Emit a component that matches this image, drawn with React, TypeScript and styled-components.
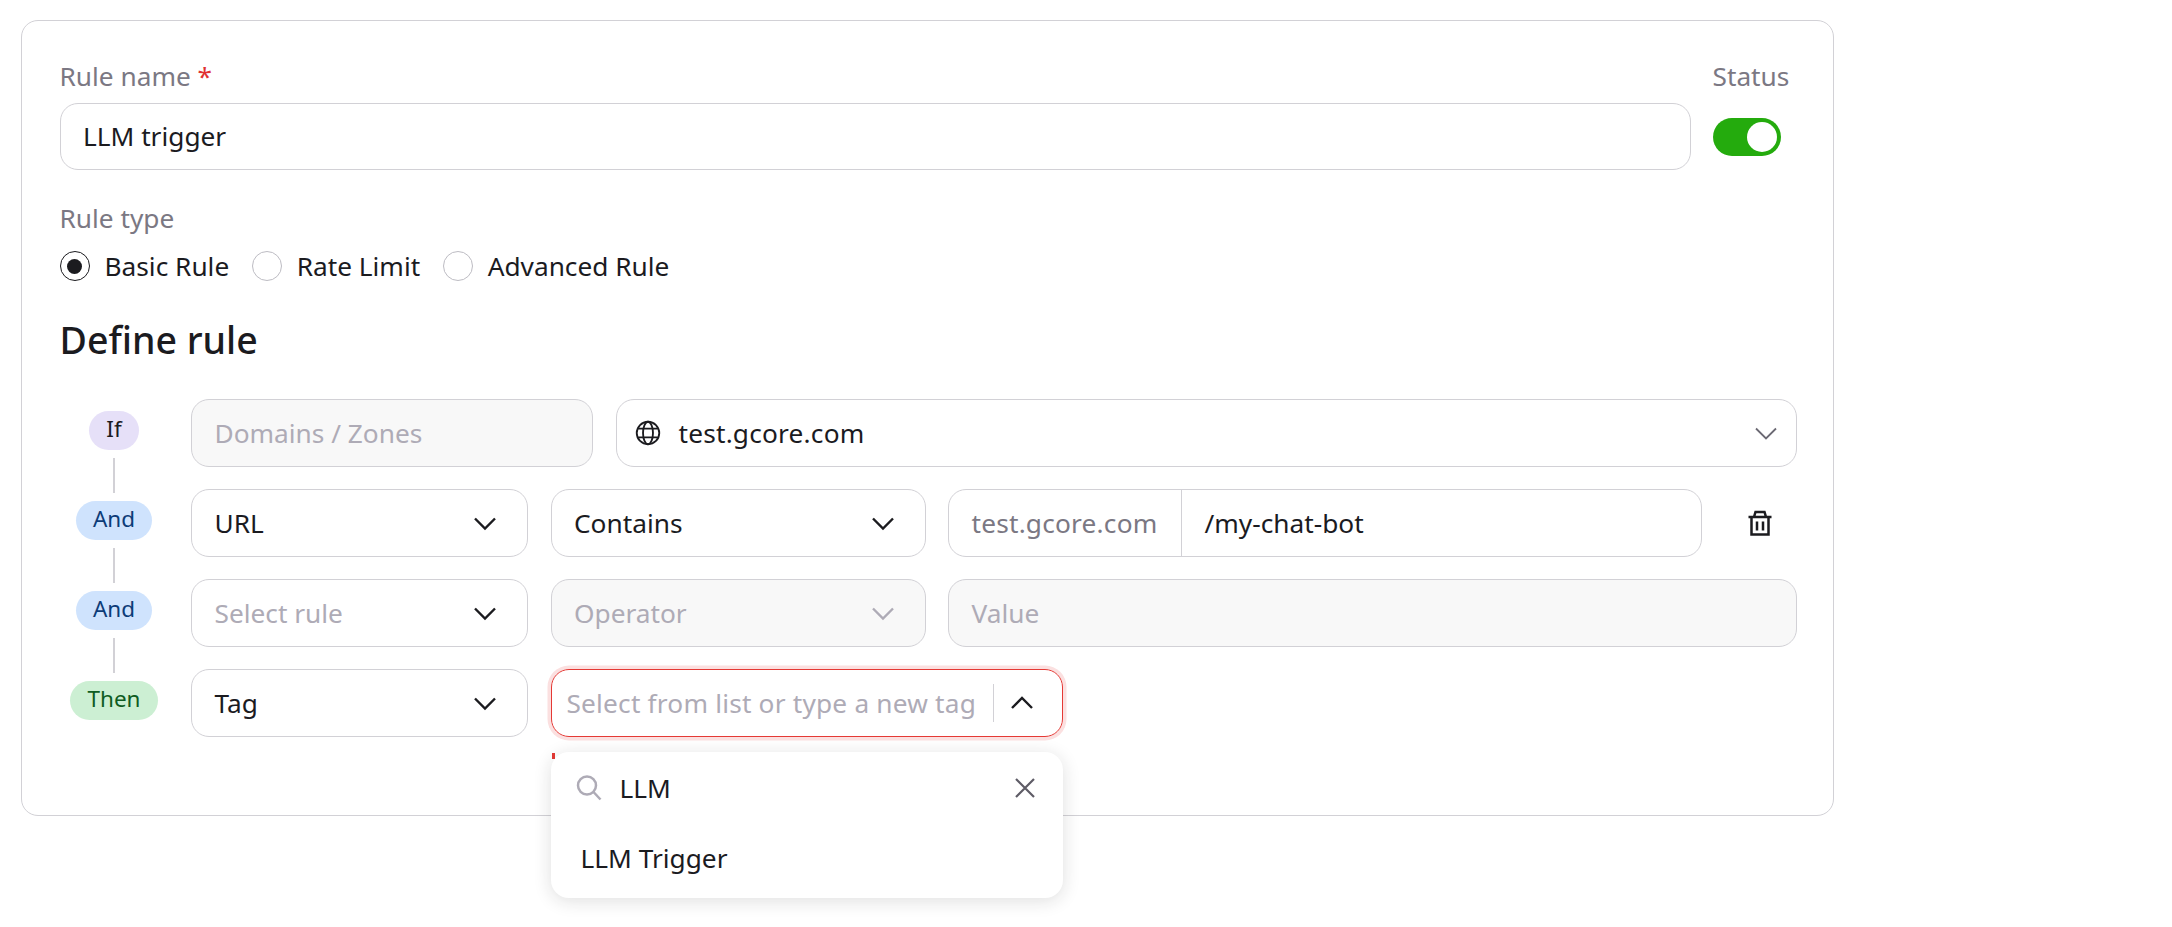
import React from "react";
import styled, { createGlobalStyle } from "styled-components";

const GlobalStyle = createGlobalStyle`
  html, body {
    margin: 0;
    padding: 0;
    background: #fff;
    font-family: "Noto Sans", sans-serif;
    color: #1b1b1f;
  }
  * { box-sizing: border-box; }
`;

const ChevronDown = ({ color = "#1b1b1f", width = 2.4 }: { color?: string; width?: number }) => (
  <svg width="24" height="24" viewBox="0 0 24 24" fill="none" stroke={color} strokeWidth={width}>
    <path d="M2 7.5 12 17.5 22 7.5" />
  </svg>
);

const ChevronUp = () => (
  <svg width="24" height="24" viewBox="0 0 24 24" fill="none" stroke="#1b1b1f" strokeWidth="2.4">
    <path d="M2 17 12 7 22 17" />
  </svg>
);

const GlobeIcon = () => (
  <svg width="26" height="26" viewBox="0 0 24 24" fill="none" stroke="#1b1b1f" strokeWidth="1.7">
    <circle cx="12" cy="12" r="10.4" />
    <ellipse cx="12" cy="12" rx="4.6" ry="10.4" />
    <path d="M2.8 8h18.4M2.8 16h18.4" />
  </svg>
);

const TrashIcon = () => (
  <svg width="24" height="26" viewBox="0 0 24 26" fill="none" stroke="#1b1b1f" strokeWidth="2.5">
    <path d="M0.5 7h23M6 7l1.5-5h9L18 7M3.5 7v17.5h17V7M9 11.5v9M15 11.5v9" />
  </svg>
);

const SearchIcon = () => (
  <svg width="26" height="26" viewBox="0 0 26 26" fill="none" stroke="#aeabb6" strokeWidth="2.5">
    <circle cx="11" cy="10.5" r="9" />
    <path d="m17.5 17 7 7.5" />
  </svg>
);

const CloseIcon = () => (
  <svg width="20" height="20" viewBox="0 0 20 20" fill="none" stroke="#5e5c66" strokeWidth="2.2">
    <path d="M1 1l18 18M19 1 1 19" />
  </svg>
);

const App = () => {
  return (
    <Page>
      <GlobalStyle />
      <Card>
        <TopRow>
          <NameField>
            <Label>
              Rule name <Required>*</Required>
            </Label>
            <Field>
              <Value>LLM trigger</Value>
            </Field>
          </NameField>
          <StatusField>
            <Label>Status</Label>
            <Toggle>
              <Knob />
            </Toggle>
          </StatusField>
        </TopRow>

        <TypeBlock>
          <Label>Rule type</Label>
          <RadioRow>
            <RadioItem>
              <Radio $checked />
              Basic Rule
            </RadioItem>
            <RadioItem>
              <Radio />
              Rate Limit
            </RadioItem>
            <RadioItem>
              <Radio />
              Advanced Rule
            </RadioItem>
          </RadioRow>
        </TypeBlock>

        <Heading>Define rule</Heading>

        <Rules>
          <RuleRow>
            <BadgeCell>
              <Badge $kind="if">If</Badge>
            </BadgeCell>
            <Field $disabled $width={402}>
              <Placeholder>Domains / Zones</Placeholder>
            </Field>
            <DomainField $grow>
              <GlobeIcon />
              <DomainValue>test.gcore.com</DomainValue>
              <ChevronDown color="#6b6973" width={1.8} />
            </DomainField>
          </RuleRow>

          <RuleRow>
            <BadgeCell $line>
              <Badge $kind="and">And</Badge>
            </BadgeCell>
            <Field $width={337}>
              <Value>URL</Value>
              <ChevronDown />
            </Field>
            <Field $width={375}>
              <Value>Contains</Value>
              <ChevronDown />
            </Field>
            <PrefixField>
              <Prefix>test.gcore.com</Prefix>
              <PrefixValue>/my-chat-bot</PrefixValue>
            </PrefixField>
            <TrashButton>
              <TrashIcon />
            </TrashButton>
          </RuleRow>

          <RuleRow>
            <BadgeCell $line>
              <Badge $kind="and">And</Badge>
            </BadgeCell>
            <Field $width={337}>
              <Placeholder>Select rule</Placeholder>
              <ChevronDown />
            </Field>
            <Field $disabled $width={375}>
              <Placeholder>Operator</Placeholder>
              <ChevronDown color="#aeabb6" />
            </Field>
            <Field $disabled $grow>
              <Placeholder>Value</Placeholder>
            </Field>
          </RuleRow>

          <RuleRow>
            <BadgeCell $line>
              <Badge $kind="then">Then</Badge>
            </BadgeCell>
            <Field $width={337}>
              <Value>Tag</Value>
              <ChevronDown />
            </Field>
            <TagSelect>
              <TagInput>
                <TagPlaceholder>Select from list or type a new tag</TagPlaceholder>
                <TagDivider />
                <ChevronUp />
              </TagInput>
              <ErrorTick />
              <Dropdown>
                <SearchRow>
                  <SearchIcon />
                  <SearchValue>LLM</SearchValue>
                  <CloseIcon />
                </SearchRow>
                <Option>LLM Trigger</Option>
              </Dropdown>
            </TagSelect>
          </RuleRow>
        </Rules>
      </Card>
    </Page>
  );
};

export default App;

const badgeColors = {
  if: { bg: "#e6e0f8", fg: "#1b1b1f" },
  and: { bg: "#cfe3fd", fg: "#0d3c78" },
  then: { bg: "#ccefd3", fg: "#0e5c22" },
};

const Page = styled.div`
  width: 2172px;
  height: 927px;
  padding: 20px 0 0 21px;
  overflow: hidden;
`;

const Card = styled.div`
  width: 1813px;
  height: 796px;
  padding: 37.5px 36.5px 0 37.5px;
  border: 1.5px solid #d2d1d6;
  border-radius: 17px;
`;

const TopRow = styled.div`
  display: flex;
  align-items: flex-start;
  gap: 22px;
`;

const NameField = styled.div`
  width: 1631px;
  flex: none;
  display: flex;
  flex-direction: column;
  gap: 9px;
`;

const StatusField = styled.div`
  display: flex;
  flex-direction: column;
`;

const Label = styled.div`
  font-size: 26.25px;
  line-height: 35px;
  color: #7b7883;
`;

const Required = styled.span`
  color: #e03131;
`;

const Field = styled.div<{ $disabled?: boolean; $width?: number; $grow?: boolean }>`
  display: flex;
  align-items: center;
  height: 67.5px;
  padding: 0 30px 0 22.5px;
  border: 1.5px solid #d2d1d6;
  border-radius: 18px;
  background: ${(p) => (p.$disabled ? "#f8f8f8" : "#fff")};
  flex: ${(p) => (p.$grow ? "1 1 0" : "none")};
  width: ${(p) => (p.$width ? `${p.$width}px` : "auto")};
  justify-content: space-between;
`;

const DomainField = styled(Field)`
  padding: 0 18px 0 18px;
`;

const Value = styled.span`
  font-size: 26.25px;
  color: #1b1b1f;
`;

const Placeholder = styled.span`
  font-size: 26.25px;
  color: #aeabb6;
  white-space: nowrap;
`;

const DomainValue = styled(Value)`
  flex: 1;
  margin-left: 18px;
  letter-spacing: 0.2px;
`;

const Toggle = styled.div`
  display: flex;
  justify-content: flex-end;
  align-items: center;
  width: 68px;
  height: 38px;
  margin-top: 24px;
  padding: 0 3.5px;
  border-radius: 19px;
  background: #24ab0d;
`;

const Knob = styled.div`
  width: 30px;
  height: 30px;
  border-radius: 50%;
  background: #fff;
`;

const TypeBlock = styled.div`
  margin-top: 31px;
`;

const RadioRow = styled.div`
  display: flex;
  gap: 22.5px;
  margin-top: 14px;
`;

const RadioItem = styled.label`
  display: flex;
  align-items: center;
  gap: 15px;
  height: 32px;
  font-size: 26.25px;
`;

const Radio = styled.span<{ $checked?: boolean }>`
  display: flex;
  align-items: center;
  justify-content: center;
  width: 30px;
  height: 30px;
  border-radius: 50%;
  border: 1.5px solid ${(p) => (p.$checked ? "#1b1b1f" : "#bdbcc3")};
  &::after {
    content: "";
    display: ${(p) => (p.$checked ? "block" : "none")};
    width: 15px;
    height: 15px;
    border-radius: 50%;
    background: #1b1b1f;
  }
`;

const Heading = styled.h2`
  margin: 34px 0 0;
  font-size: 37.5px;
  line-height: 48px;
  font-weight: 500;
  color: #1b1b1f;
`;

const Rules = styled.div`
  display: flex;
  flex-direction: column;
  gap: 22.5px;
  margin-top: 35px;
`;

const RuleRow = styled.div`
  display: flex;
  gap: 22.5px;
  height: 67.5px;
`;

const BadgeCell = styled.div<{ $line?: boolean }>`
  position: relative;
  flex: none;
  width: 109px;
  display: flex;
  justify-content: center;
  padding-top: 12px;
  &::before {
    content: "";
    display: ${(p) => (p.$line ? "block" : "none")};
    position: absolute;
    top: -31px;
    left: 53.5px;
    width: 2.25px;
    height: 35px;
    background: #d2d1d6;
  }
`;

const Badge = styled.div<{ $kind: "if" | "and" | "then" }>`
  height: 39px;
  padding: 0 17px;
  border-radius: 20px;
  font-size: 22.5px;
  line-height: 36px;
  background: ${(p) => badgeColors[p.$kind].bg};
  color: ${(p) => badgeColors[p.$kind].fg};
`;

const PrefixField = styled.div`
  display: flex;
  flex: none;
  width: 753.5px;
  height: 67.5px;
  border: 1.5px solid #d2d1d6;
  border-radius: 18px;
  align-items: center;
`;

const Prefix = styled.div`
  width: 233px;
  height: 100%;
  padding-left: 22.5px;
  border-right: 1px solid #d2d1d6;
  display: flex;
  align-items: center;
  font-size: 26.25px;
  letter-spacing: 0.2px;
  color: #7b7883;
`;

const PrefixValue = styled(Value)`
  margin-left: 22.5px;
`;

const TrashButton = styled.div`
  display: flex;
  align-items: center;
  margin-left: 24px;
`;

const TagSelect = styled.div`
  position: relative;
  flex: none;
  width: 512px;
`;

const TagInput = styled.div`
  display: flex;
  align-items: center;
  height: 67.5px;
  padding: 0 28px 0 15px;
  border: 1.5px solid #e53935;
  border-radius: 18px;
  box-shadow: 0 0 0 3.5px #fbe0e0;
`;

const TagPlaceholder = styled(Placeholder)`
  flex: 1;
  letter-spacing: 0.2px;
`;

const TagDivider = styled.div`
  width: 1px;
  height: 38px;
  margin-right: 16px;
  background: #d2d1d6;
`;

const ErrorTick = styled.div`
  position: absolute;
  top: 84px;
  left: 1px;
  width: 3px;
  height: 6px;
  background: #e53935;
`;

const Dropdown = styled.div`
  position: absolute;
  top: 83px;
  left: 0;
  right: 0;
  height: 146px;
  border-radius: 18px;
  background: #fff;
  box-shadow: 0 3px 18px rgba(27, 27, 31, 0.14);
`;

const SearchRow = styled.div`
  display: flex;
  align-items: center;
  height: 72px;
  padding: 0 28px 0 25px;
`;

const SearchValue = styled(Value)`
  flex: 1;
  margin-left: 18px;
`;

const Option = styled.div`
  margin-top: 16px;
  padding-left: 30px;
  font-size: 26.25px;
  line-height: 36px;
`;
